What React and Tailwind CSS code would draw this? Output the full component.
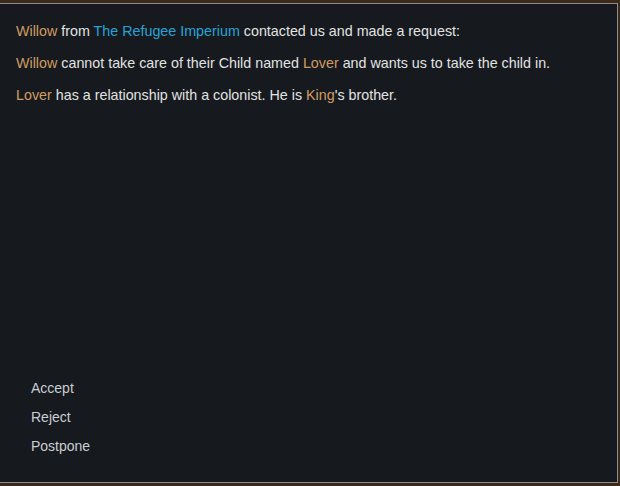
export default function App() {
  const o = "text-[#d19a62]";
  const c = "text-[#29a3d6]";
  return (
    <div className="w-[620px] h-[486px] bg-[#3b2a1c] pt-[3px] overflow-hidden" style={{ fontFamily: '"Liberation Sans", Arial, sans-serif' }}>
      <div className="w-[618px] h-[480px] bg-[#161a1e] border-t border-r border-b border-[#8d8d8d] flex flex-col justify-between pt-[17px] pb-[26px]">
        <div className="flex flex-col gap-[12px] pl-[16px] text-[14.3px] leading-[20px] text-[#e2e2e2]">
          <p><span className={o}>Willow</span> from <span className={c}>The Refugee Imperium</span> contacted us and made a request:</p>
          <p><span className={o}>Willow</span> cannot take care of their Child named <span className={o}>Lover</span> and wants us to take the child in.</p>
          <p><span className={o}>Lover</span> has a relationship with a colonist. He is <span className={o}>King</span>'s brother.</p>
        </div>
        <div className="flex flex-col gap-[9px] pl-[31px] text-[14px] leading-[20px] text-[#c9cdd4]">
          <div>Accept</div>
          <div>Reject</div>
          <div>Postpone</div>
        </div>
      </div>
    </div>
  );
}
